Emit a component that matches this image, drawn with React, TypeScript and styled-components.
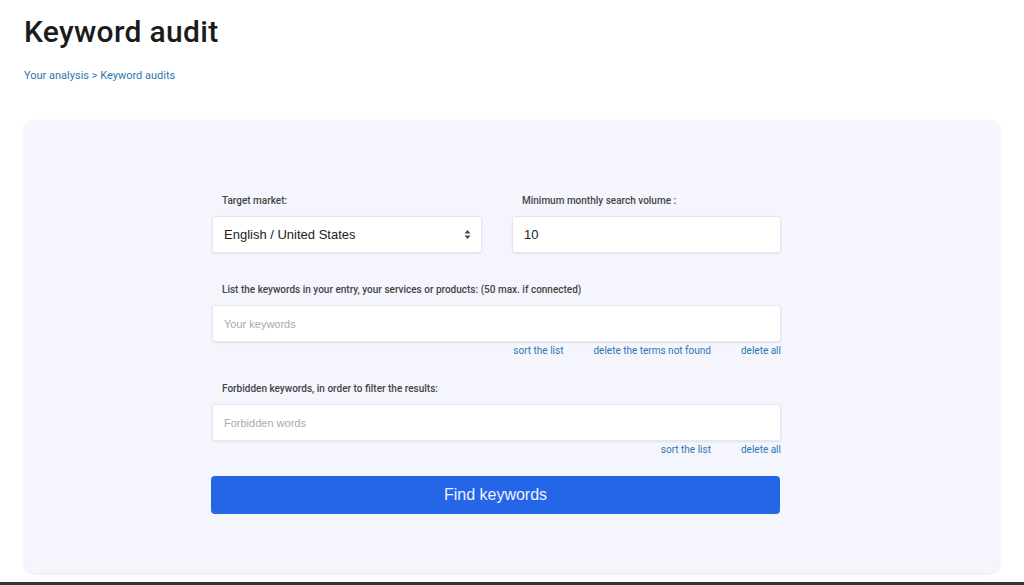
import React from "react";
import styled, { createGlobalStyle } from "styled-components";

const Global = createGlobalStyle`
  html, body { margin: 0; padding: 0; background: #fff; }
  body { font-family: Roboto, "Noto Sans", sans-serif; height: 585px; overflow: hidden; }
`;

const Page = styled.div`
  box-sizing: border-box;
  padding: 12px 24px 0 24px;
  display: flex;
  flex-direction: column;
  border-bottom: 3px solid #343434;
  height: 585px;
`;

const Title = styled.h1`
  margin: 0;
  font-family: Roboto, sans-serif;
  font-weight: 500;
  font-size: 30px;
  line-height: 40px;
  color: #1b1b1b;
  letter-spacing: 0.3px;
`;

const Crumbs = styled.div`
  margin-top: 17px;
  font-size: 11px;
  line-height: 14px;
  color: #2b78b0;
`;

const Card = styled.div`
  margin-top: 37px;
  width: 976px;
  height: 453px;
  box-sizing: border-box;
  background: #f5f5fe;
  border-radius: 10px;
  box-shadow: 0 1px 3px rgba(0, 0, 0, 0.1);
  display: flex;
  justify-content: flex-start;
  padding-top: 75px;
  padding-left: 187px;
`;

const Form = styled.div`
  width: 570px;
  display: flex;
  flex-direction: column;
`;

const Row = styled.div`
  display: grid;
  grid-template-columns: 270px 269px;
  column-gap: 30px;
  width: 569px;
  margin-left: 1px;
`;

const Field = styled.div`
  display: flex;
  flex-direction: column;
`;

const Label = styled.div`
  font-size: 10px;
  font-weight: 500;
  color: #454545;
  line-height: 12px;
  padding-left: 10px;
  margin-bottom: 9px;
`;

const Box = styled.div<{ $muted?: boolean }>`
  height: 37px;
  box-sizing: border-box;
  background: #fff;
  border: 1px solid #e6e6ee;
  border-radius: 3px;
  box-shadow: 0 1px 2px rgba(0, 0, 0, 0.08);
  display: flex;
  align-items: center;
  justify-content: space-between;
  padding: 0 10px 0 11px;
  font-family: "Liberation Sans", Arial, sans-serif;
  font-size: ${(p) => (p.$muted ? "11px" : "13px")};
  color: ${(p) => (p.$muted ? "#a9a9a9" : "#222")};
`;

const Wide = styled.div<{ $top: number }>`
  margin-top: ${(p) => p.$top}px;
  width: 569px;
  margin-left: 1px;
  display: flex;
  flex-direction: column;
`;

const Links = styled.div`
  display: flex;
  justify-content: flex-end;
  gap: 30px;
  margin-top: 3px;
  font-size: 10px;
  line-height: 12px;
  color: #2b78b0;
`;

const Button = styled.button`
  margin-top: 20px;
  width: 569px;
  height: 38px;
  border: none;
  border-radius: 4px;
  background: #2565e8;
  color: #eef3ff;
  font-family: "Liberation Sans", Arial, sans-serif;
  font-size: 16px;
  cursor: pointer;
`;

const Arrows = () => (
  <svg width="7" height="11" viewBox="0 0 7 11">
    <path d="M3.5 1 L6.5 4.5 H0.5 Z" fill="#444" />
    <path d="M3.5 10 L6.5 6.5 H0.5 Z" fill="#444" />
  </svg>
);

export default function App() {
  return (
    <>
      <Global />
      <Page>
        <Title>Keyword audit</Title>
        <Crumbs>Your analysis &gt; Keyword audits</Crumbs>
        <Card>
          <Form>
            <Row>
              <Field>
                <Label>Target market:</Label>
                <Box>
                  <span>English / United States</span>
                  <Arrows />
                </Box>
              </Field>
              <Field>
                <Label>Minimum monthly search volume :</Label>
                <Box>
                  <span>10</span>
                </Box>
              </Field>
            </Row>
            <Wide $top={31}>
              <Label>List the keywords in your entry, your services or products: (50 max. if connected)</Label>
              <Box $muted>Your keywords</Box>
              <Links>
                <span>sort the list</span>
                <span>delete the terms not found</span>
                <span>delete all</span>
              </Links>
            </Wide>
            <Wide $top={26}>
              <Label>Forbidden keywords, in order to filter the results:</Label>
              <Box $muted>Forbidden words</Box>
              <Links>
                <span>sort the list</span>
                <span>delete all</span>
              </Links>
            </Wide>
            <Button>Find keywords</Button>
          </Form>
        </Card>
      </Page>
    </>
  );
}
